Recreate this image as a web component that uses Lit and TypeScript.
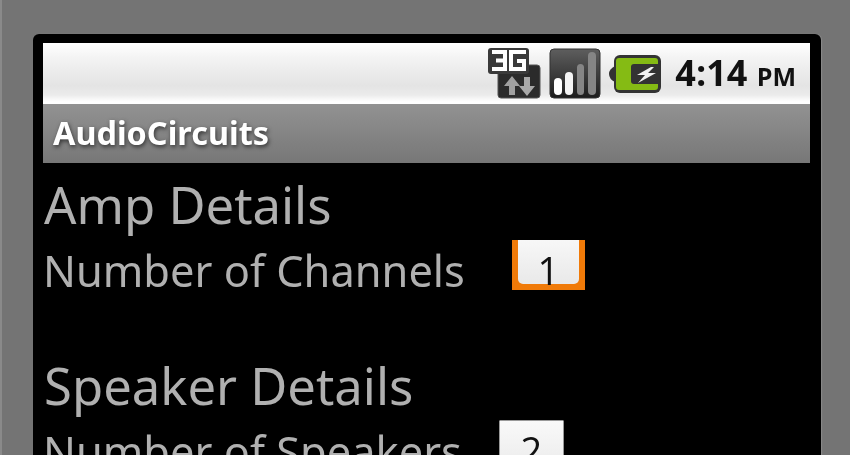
import { LitElement, html, css } from "lit";
import { customElement } from "lit/decorators.js";

@customElement("app-root")
export class AppRoot extends LitElement {
  static styles = css`
    :host { display: block; width: 850px; height: 455px; overflow: hidden; background: #747474; font-family: "Open Sans", "Noto Sans", sans-serif; }
    .page { box-sizing: border-box; height: 455px; padding: 34px 29px 0 33px; filter: blur(0.6px); box-shadow: inset 2px 0 0 #8a8a8a; }
    .phone { background: #000; border-radius: 6px 6px 0 0; height: 440px; padding: 9px 10px 0 10px; box-sizing: border-box; overflow: hidden; box-shadow: 1px 0 1px #8a8a8a; }
    .screen { width: 767px; }
    .status { height: 61px; display: flex; justify-content: flex-end; align-items: center; padding-right: 14px;
      background: linear-gradient(#fff 0%, #f3f3f3 25%, #e4e4e4 70%, #ebebeb 85%, #fff 96%); }
    .status svg { display: block; flex: none; }
    .net { margin-right: 8px; }
    .sig { margin-right: 8px; }
    .bat { margin-right: 14px; margin-top: 1px; }
    .clock { font-size: 36px; font-weight: 700; color: #111; line-height: 44px; white-space: nowrap; margin-top: 2px; }
    .clock small { font-size: 25px; font-weight: 700; }
    .title { height: 59px; box-sizing: border-box; padding: 8px 0 0 10px; background: linear-gradient(#929292, #777);
      color: #fff; font-size: 32.4px; font-weight: 700; line-height: 40px; text-shadow: 1px 2px 4px #333; font-family: "Noto Sans", sans-serif; }
    .body { color: #b0b0b0; font-family: "Noto Sans", "Open Sans", sans-serif; }
    .head { font-size: 50.8px; line-height: 62px; padding: 11px 0 0 1px; }
    .head.second { padding-top: 53px; }
    .row { display: flex; align-items: flex-start; height: 66px; font-size: 43.4px; line-height: 54px; }
    .label { white-space: nowrap; padding-top: 8px; }
    .btn { box-sizing: border-box; color: #111; display: flex; justify-content: center; font-size: 38px; line-height: 44px; font-family: "Open Sans", sans-serif; }
    .btn.focus { width: 73px; height: 50px; margin: 4px 0 0 47px; background: #f07a08; }
    .face { width: 61px; height: 44px; background: linear-gradient(#f7f7f7, #e9e9e9); border-radius: 0 0 5px 5px; padding-top: 8px; box-sizing: border-box; display: flex; justify-content: center; white-space: nowrap; }
    .btn.plain { width: 65px; height: 60px; margin: 3px 0 0 37px; border-radius: 1px; border: 1px solid #999; padding-top: 7px; background: linear-gradient(#f9f9f9, #e8e8e8); }
  `;

  render() {
    return html`<div class="page"><div class="phone"><div class="screen">
      <div class="status">
        <svg class="net" width="53" height="51" viewBox="0 0 53 51">
          <rect x="10" y="17" width="42" height="33" rx="3" fill="#2b2b2b" stroke="#555" />
          <rect x="0" y="0" width="41" height="26" rx="3" fill="#3a3a3a" />
          <path d="M4 4h13v17H4M8 12.500h9M38 4H23v17h13v-8h-7" fill="none" stroke="#fff" stroke-width="4" />
          <path d="M21 47V38h-5l8-10 8 10h-5v9z" fill="#a0a0a0" />
          <path d="M36 29h6v9h5l-8 10-8-10h5z" fill="#a8a8a8" />
        </svg>
        <svg class="sig" width="52" height="51" viewBox="0 0 52 51">
          <defs><linearGradient id="sg" x1="0" y1="0" x2="0" y2="1"><stop offset="0" stop-color="#5e5e5e" /><stop offset="1" stop-color="#1c1c1c" /></linearGradient></defs>
          <rect x="1" y="1" width="50" height="49" rx="4" fill="url(#sg)" stroke="#333" />
          <rect x="5" y="30" width="8" height="17" rx="4" fill="#fff" />
          <rect x="16" y="24" width="8" height="23" rx="4" fill="#f4f4f4" />
          <rect x="28" y="16" width="7" height="31" rx="3.500" fill="#858585" />
          <rect x="39" y="4" width="8" height="43" rx="4" fill="#858585" />
        </svg>
        <svg class="bat" width="52" height="38" viewBox="0 0 52 38">
          <path d="M6 11 Q0 14 0 19 Q0 24 6 27Z" fill="#333" />
          <rect x="5" y="0" width="47" height="38" rx="6" fill="#333" />
          <path d="M10 3h36q3 0 3 3v3H25q-3 0-3 3v14q0 3 3 3h24v3q0 3-3 3H10q-3 0-3-3V6q0-3 3-3z" fill="#85bb14" />
          <path d="M42 12 L28 20h8l-7 8 18-10h-8l6-6z" fill="#f2f2f2" />
        </svg>
        <div class="clock">4:14 <small>PM</small></div>
      </div>
      <div class="title">AudioCircuits</div>
      <div class="body">
        <div class="head">Amp Details</div>
        <div class="row"><span class="label">Number of Channels</span><div class="btn focus"><div class="face">1</div></div></div>
        <div class="head second">Speaker Details</div>
        <div class="row"><span class="label">Number of Speakers</span><div class="btn plain">2</div></div>
      </div>
    </div></div></div>`;
  }
}
